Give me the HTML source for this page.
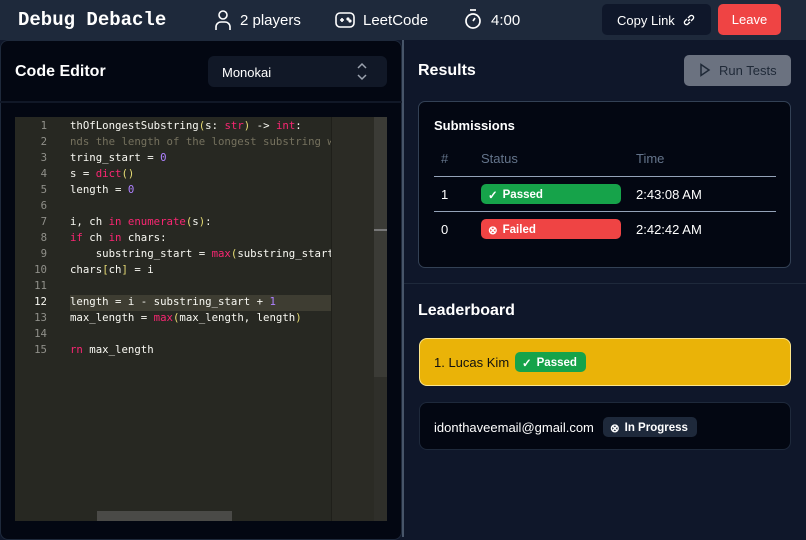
<!DOCTYPE html>
<html><head><style>
*{box-sizing:border-box;margin:0;padding:0}
body{width:806px;height:537px;overflow:hidden;background:#0f172a;font-family:"Liberation Sans",sans-serif;color:#fff;position:relative}
.abs{position:absolute}
.hdr{left:0;top:0;width:806px;height:40px;background:#1e293b}
.mono{font-family:"Liberation Mono",monospace}
.code{font-family:"DejaVu Sans Mono","Liberation Mono",monospace;font-size:10.7px;color:#f8f8f2;white-space:pre}
.ln{font-family:"DejaVu Sans Mono",monospace;font-size:10.7px;color:#90908a;text-align:right;width:32px}
.k{color:#f92672}.n{color:#ae81ff}.y{color:#e6db74}.c{color:#75715e}.b{color:#f8f8f2}
.badge{border-radius:5px;font-size:11.5px;font-weight:bold;display:flex;align-items:center;gap:5px;padding-left:7px;padding-top:1px}
</style></head><body>
<div class="abs hdr"></div>
<div class="abs mono" style="left:18px;top:9px;font-size:19px;font-weight:bold">Debug Debacle</div>
<svg class="abs" style="left:213px;top:9px" width="20" height="22" viewBox="0 0 20 22" fill="none" stroke="#fff" stroke-width="1.6"><circle cx="10" cy="6" r="4"/><path d="M3 21v-3a5 5 0 0 1 5-5h4a5 5 0 0 1 5 5v3"/></svg>
<div class="abs" style="left:240px;top:12px;font-size:15px">2 players</div>
<svg class="abs" style="left:334px;top:10px" width="22" height="20" viewBox="0 0 22 20" fill="none" stroke="#fff" stroke-width="1.6"><rect x="2" y="3" width="18" height="14" rx="4"/><path d="M6 10h4M8 8v4"/><circle cx="14" cy="9" r=".8"/><circle cx="16" cy="11" r=".8"/></svg>
<div class="abs" style="left:363px;top:12px;font-size:15px">LeetCode</div>
<svg class="abs" style="left:463px;top:8px" width="20" height="22" viewBox="0 0 20 22" fill="none" stroke="#fff" stroke-width="1.7"><path d="M7 2h6"/><circle cx="10" cy="13" r="7"/><path d="M10 13l2-3"/></svg>
<div class="abs" style="left:491px;top:12px;font-size:15px">4:00</div>
<div class="abs" style="left:602px;top:4px;width:109px;height:31px;background:#0f172a;border-radius:5px"></div>
<div class="abs" style="left:617px;top:13px;font-size:13px">Copy Link</div>
<svg class="abs" style="left:682px;top:13px" width="14" height="14" viewBox="0 0 14 14" fill="none" stroke="#fff" stroke-width="1.3"><path d="M6 8l2-2M5 6L3 8a2 2 0 0 0 3 3l2-2M9 8l2-2a2 2 0 0 0-3-3L6 5"/></svg>
<div class="abs" style="left:718px;top:4px;width:63px;height:31px;background:#ef4444;border-radius:5px;font-size:13px;text-align:center;line-height:32px">Leave</div>

<div class="abs" style="left:0;top:40px;width:402px;height:500px;background:#030712;border:1px solid #1e293b;border-radius:8px"></div>
<div class="abs" style="left:402px;top:40px;width:2px;height:497px;background:#475569"></div>
<div class="abs" style="left:15px;top:63px;font-size:16px;font-weight:bold">Code Editor</div>
<div class="abs" style="left:208px;top:56px;width:179px;height:31px;background:#111827;border-radius:6px"></div>
<div class="abs" style="left:222px;top:65px;font-size:13px">Monokai</div>
<svg class="abs" style="left:355px;top:62px" width="14" height="19" viewBox="0 0 14 19" fill="none" stroke="#9ca3af" stroke-width="1.5"><path d="M3 6l4-4 4 4M3 13l4 4 4-4"/></svg>
<div class="abs" style="left:0;top:101px;width:402px;height:2px;background:#111827"></div>

<div class="abs" style="left:15px;top:117px;width:372px;height:404px;background:#272822;overflow:hidden">
 <div class="abs" style="left:55px;top:178px;width:261px;height:16px;background:#3e3d32"></div>
 <div class="abs" style="left:316px;top:0;width:43px;height:404px;background:#2b2b25;border-left:1px solid #1f1f1a"></div>
 <div class="abs" style="left:359px;top:0;width:13px;height:404px;background:#2f2f2a"></div>
 <div class="abs" style="left:359px;top:0;width:13px;height:260px;background:#3b3b36"></div>
 <div class="abs" style="left:359px;top:112px;width:13px;height:2px;background:#777"></div>
 <div class="abs" style="left:82px;top:394px;width:135px;height:10px;background:#4a4a47"></div>
 <div class="abs" style="left:0;top:1px">
 <div class="ln" style="line-height:16px">1<br>2<br>3<br>4<br>5<br>6<br>7<br>8<br>9<br>10<br>11<br><span style="color:#f8f8f2">12</span><br>13<br>14<br>15</div>
 </div>
 <div class="abs" style="left:55px;top:1px;width:261px;height:300px;overflow:hidden">
 <div class="code" style="line-height:16px">thOfLongestSubstring<span class="y">(</span>s: <span class="k">str</span><span class="y">)</span> -&gt; <span class="k">int</span>:
<span class="c">nds the length of the longest substring w</span>
tring_start = <span class="n">0</span>
s = <span class="k">dict</span><span class="y">()</span>
length = <span class="n">0</span>

i, ch <span class="k">in</span> <span class="k">enumerate</span><span class="y">(</span>s<span class="y">)</span>:
<span class="k">if</span> ch <span class="k">in</span> chars:
    substring_start = <span class="k">max</span><span class="y">(</span>substring_start
chars<span class="y">[</span>ch<span class="y">]</span> = i

length = i - substring_start + <span class="n">1</span>
max_length = <span class="k">max</span><span class="y">(</span>max_length, length<span class="y">)</span>

<span class="k">rn</span> max_length</div></div>
</div>

<div class="abs" style="left:418px;top:62px;font-size:16px;font-weight:bold">Results</div>
<div class="abs" style="left:684px;top:55px;width:107px;height:31px;background:#6b7280;border-radius:5px"></div>
<svg class="abs" style="left:699px;top:63px" width="12" height="14" viewBox="0 0 12 14" fill="none" stroke="#1f2937" stroke-width="1.5"><path d="M2 1.5l8 5.5-8 5.5z"/></svg>
<div class="abs" style="left:719px;top:63px;font-size:13px;color:#1f2937">Run Tests</div>

<div class="abs" style="left:418px;top:101px;width:373px;height:167px;background:#030712;border:1px solid #334155;border-radius:7px"></div>
<div class="abs" style="left:434px;top:118px;font-size:13px;font-weight:bold">Submissions</div>
<div class="abs" style="left:441px;top:151px;font-size:13px;color:#64748b">#</div>
<div class="abs" style="left:481px;top:151px;font-size:13px;color:#64748b">Status</div>
<div class="abs" style="left:636px;top:151px;font-size:13px;color:#64748b">Time</div>
<div class="abs" style="left:434px;top:176px;width:342px;height:1px;background:#94a3b8"></div>
<div class="abs" style="left:434px;top:211px;width:342px;height:1px;background:#94a3b8"></div>
<div class="abs" style="left:441px;top:187px;font-size:13px">1</div>
<div class="abs" style="left:441px;top:222px;font-size:13px">0</div>
<div class="abs badge" style="left:481px;top:184px;width:140px;height:20px;background:#16a34a">&#10003;&#xFE0E;<span>Passed</span></div>
<div class="abs badge" style="left:481px;top:219px;width:140px;height:20px;background:#ef4444">&#8855;<span>Failed</span></div>
<div class="abs" style="left:636px;top:187px;font-size:13px">2:43:08 AM</div>
<div class="abs" style="left:636px;top:222px;font-size:13px">2:42:42 AM</div>

<div class="abs" style="left:404px;top:283px;width:402px;height:1px;background:#1e293b"></div>
<div class="abs" style="left:418px;top:302px;font-size:16px;font-weight:bold">Leaderboard</div>
<div class="abs" style="left:419px;top:338px;width:372px;height:48px;background:#eab308;border:1px solid #fde68a;border-radius:8px"></div>
<div class="abs" style="left:434px;top:355px;font-size:13px;color:#111">1. Lucas Kim</div>
<div class="abs badge" style="left:515px;top:352px;width:71px;height:20px;background:#16a34a">&#10003;&#xFE0E;<span>Passed</span></div>
<div class="abs" style="left:419px;top:402px;width:372px;height:48px;background:#030712;border:1px solid #1e293b;border-radius:8px"></div>
<div class="abs" style="left:434px;top:420px;font-size:13px">idonthaveemail@gmail.com</div>
<div class="abs badge" style="left:603px;top:417px;width:94px;height:20px;background:#1e293b">&#8855;<span>In Progress</span></div>
</body></html>
